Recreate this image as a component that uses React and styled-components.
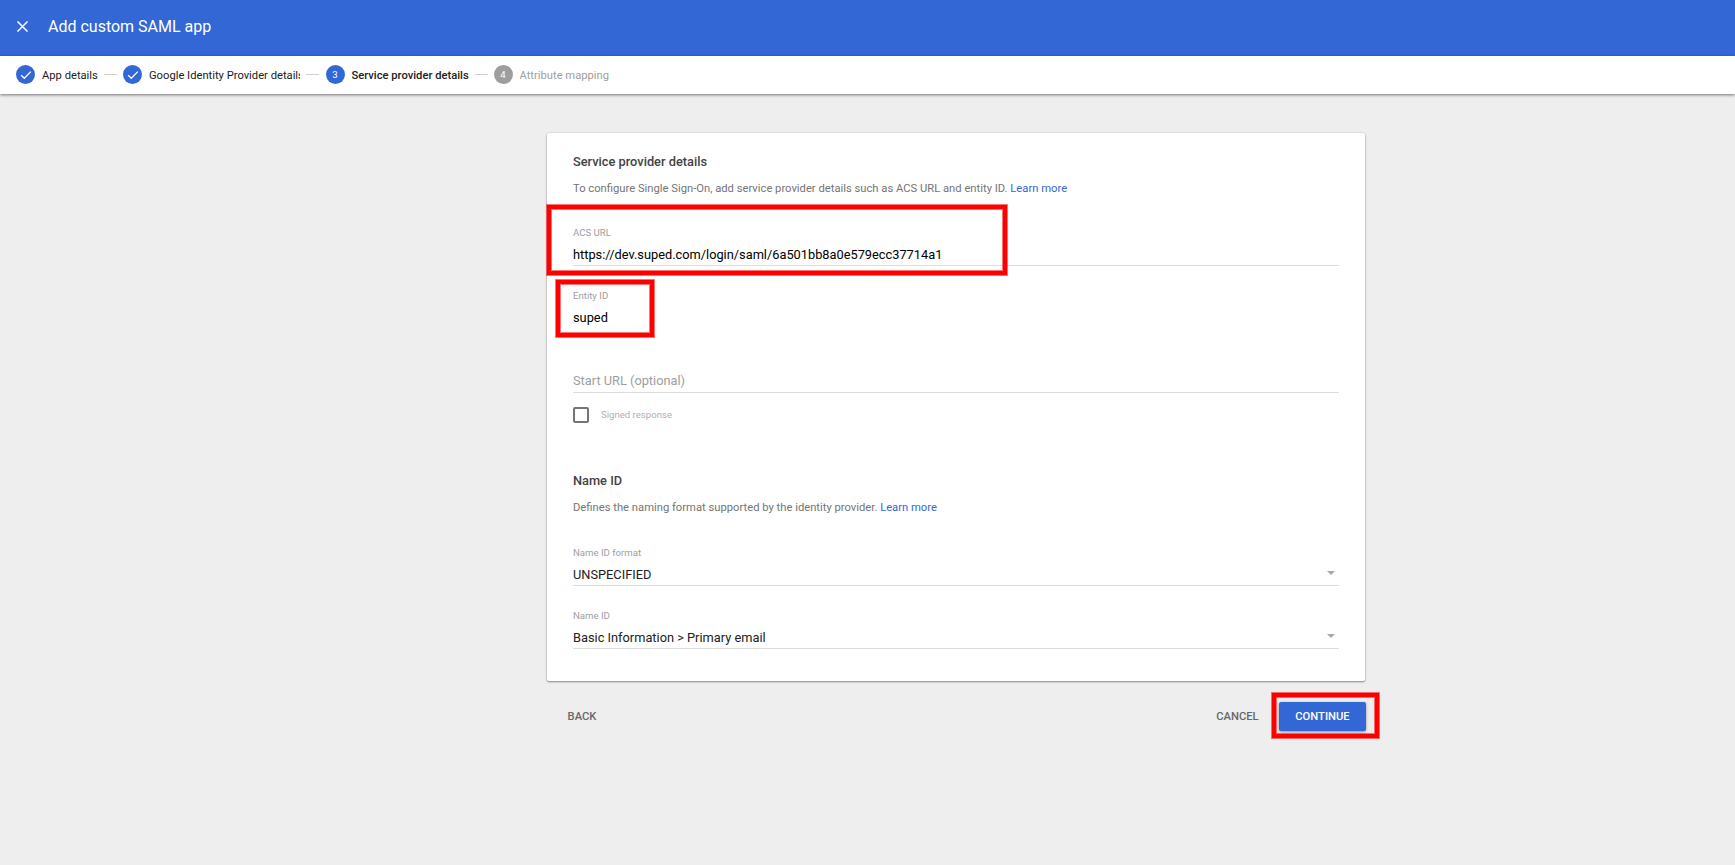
import React from "react";
import styled, { createGlobalStyle } from "styled-components";

const GlobalStyle = createGlobalStyle`
  * { box-sizing: border-box; }
  body { margin: 0; background: #eeeeee; font-family: Roboto, "Liberation Sans", sans-serif; }
`;

const Page = styled.div`
  min-height: 865px;
  display: flex;
  flex-direction: column;
  background: #eeeeee;
  color: #212121;
`;

const TopBar = styled.header`
  height: 56px;
  display: flex;
  align-items: center;
  padding: 0 16px 4px;
  gap: 19px;
  background: #3367d6;
  color: #fff;
`;

const Title = styled.h1`
  margin: 2px 0 0;
  font-size: 16px;
  font-weight: 400;
  line-height: 24px;
`;

const CloseIcon = styled.svg`
  width: 13px;
  height: 13px;
  flex: none;
`;

const Stepper = styled.nav`
  height: 38px;
  display: flex;
  align-items: center;
  padding: 0 16px 1px;
  background: #fff;
  box-shadow: 0 1px 3px rgba(0, 0, 0, 0.5);
`;

const Badge = styled.span`
  width: 19px;
  height: 19px;
  flex: none;
  margin-right: 7px;
  border-radius: 50%;
  display: flex;
  align-items: center;
  justify-content: center;
  background: ${(p) => (p.$muted ? "#9e9e9e" : "#3367d6")};
  color: #fff;
  font-size: 9.6px;
  line-height: 19px;
`;

const StepLabel = styled.span`
  margin-top: 3px;
  font-size: 11.2px;
  line-height: 16px;
  white-space: nowrap;
  overflow: hidden;
  width: ${(p) => p.$width}px;
  font-weight: ${(p) => (p.$active ? 500 : 400)};
  color: ${(p) => (p.$muted ? "#9e9e9e" : "#212121")};
`;

const Connector = styled.span`
  width: 13px;
  height: 1px;
  margin: 0 ${(p) => p.$after || 6}px 0 6px;
  background: #d0d0d0;
`;

const Main = styled.main`
  width: 818.4px;
  margin: 39px 0 0 547px;
`;

const Card = styled.section`
  height: 548px;
  padding: 19px 26px 0;
  background: #fff;
  border-radius: 2px;
  box-shadow: 0 1px 2px rgba(0, 0, 0, 0.4), 0 0 2px rgba(0, 0, 0, 0.15);
`;

const Heading = styled.h2`
  margin: 0 0 9px;
  font-size: 12.8px;
  font-weight: 500;
  line-height: 20px;
  color: #424242;
`;

const Description = styled.p`
  margin: 0 0 ${(p) => p.$gap}px;
  font-size: 11.22px;
  line-height: 16px;
  color: #757575;
`;

const Link = styled.a`
  color: #3367d6;
`;

const Field = styled.div`
  position: relative;
  height: ${(p) => p.$height || 39}px;
  margin-bottom: 24px;
  border-bottom: 1px solid ${(p) => (p.$plain ? "transparent" : "#dcdcdc")};
`;

const FieldLabel = styled.div`
  height: 12px;
  margin-bottom: 7px;
  font-size: 9.6px;
  line-height: 12px;
  color: #9e9e9e;
`;

const FieldValue = styled.div`
  display: flex;
  align-items: center;
  justify-content: space-between;
  font-size: 12.8px;
  line-height: 18px;
  color: ${(p) => p.$color || "#212121"};
`;

const Caret = styled.svg`
  width: 8px;
  height: 4px;
  margin: 0 4px 4px 0;
`;

const CheckRow = styled.label`
  display: flex;
  align-items: center;
  gap: 12px;
  height: 16px;
  margin: -10px 0 48px;
  font-size: 9.6px;
  color: #b0b0b0;
`;

const CheckText = styled.span`
  margin-bottom: 1px;
`;

const Checkbox = styled.span`
  width: 16px;
  height: 16px;
  border: 2px solid #757575;
  border-radius: 2px;
`;

const Actions = styled.div`
  display: flex;
  align-items: center;
  margin: 21px -0.6px 0 0;
`;

const Button = styled.button`
  position: relative;
  height: 29px;
  width: ${(p) => p.$width}px;
  padding: 0 0 1px;
  border: 0;
  border-radius: 2px;
  font-family: inherit;
  font-size: 11.2px;
  font-weight: 500;
  color: ${(p) => (p.$primary ? "#fff" : "#676767")};
  background: ${(p) => (p.$primary ? "#3367d6" : "transparent")};
  box-shadow: ${(p) => (p.$primary ? "0 1px 3px rgba(0,0,0,.4)" : "none")};
`;

const Spacer = styled.span`
  flex: 1;
`;

const Highlight = styled.span`
  position: absolute;
  left: ${(p) => p.$left}px;
  top: ${(p) => p.$top}px;
  width: ${(p) => p.$width}px;
  height: ${(p) => p.$height}px;
  border: 4px solid #ff0000;
  box-shadow: 0 0 0 1px rgba(255, 0, 0, 0.55), inset 0 0 0 1px rgba(255, 0, 0, 0.55);
  pointer-events: none;
  z-index: 1;
`;

const Check = () => (
  <svg width="12" height="10" viewBox="0 0 12 10" fill="none" stroke="#fff" strokeWidth="1.3">
    <path d="M1.2 5.2 4.3 8.3 10.8 1.6" />
  </svg>
);

const DropArrow = () => (
  <Caret viewBox="0 0 8 4">
    <path d="M0 0h8L4 4z" fill="#a8a8a8" />
  </Caret>
);

export default function App() {
  return (
    <Page>
      <GlobalStyle />
      <TopBar>
        <CloseIcon viewBox="0 0 13 13" fill="none" stroke="#fff" strokeWidth="1.5">
          <path d="M1.5 1.5l10 10M11.5 1.5l-10 10" />
        </CloseIcon>
        <Title>Add custom SAML app</Title>
      </TopBar>
      <Stepper>
        <Badge><Check /></Badge>
        <StepLabel $width={56}>App details</StepLabel>
        <Connector />
        <Badge><Check /></Badge>
        <StepLabel $width={151}>Google Identity Provider details</StepLabel>
        <Connector $after={6.5} />
        <Badge>3</Badge>
        <StepLabel $active $width={117}>Service provider details</StepLabel>
        <Connector />
        <Badge $muted>4</Badge>
        <StepLabel $muted $width={100}>Attribute mapping</StepLabel>
      </Stepper>
      <Main>
        <Card>
          <Heading>Service provider details</Heading>
          <Description $gap={30}>
            To configure Single Sign-On, add service provider details such as ACS URL and entity ID. <Link>Learn more</Link>
          </Description>
          <Field>
            <FieldLabel>ACS URL</FieldLabel>
            <FieldValue $color="#000">https://dev.suped.com/login/saml/6a501bb8a0e579ecc37714a1</FieldValue>
            <Highlight $left={-26} $top={-22} $width={459.5} $height={70} />
          </Field>
          <Field $plain>
            <FieldLabel>Entity ID</FieldLabel>
            <FieldValue $color="#000">suped</FieldValue>
            <Highlight $left={-17} $top={-10} $width={98} $height={57} />
          </Field>
          <Field $height={40}>
            <FieldLabel />
            <FieldValue $color="#9e9e9e">Start URL (optional)</FieldValue>
          </Field>
          <CheckRow>
            <Checkbox />
            <CheckText>Signed response</CheckText>
          </CheckRow>
          <Heading>Name ID</Heading>
          <Description $gap={31}>
            Defines the naming format supported by the identity provider. <Link>Learn more</Link>
          </Description>
          <Field>
            <FieldLabel>Name ID format</FieldLabel>
            <FieldValue>UNSPECIFIED<DropArrow /></FieldValue>
          </Field>
          <Field>
            <FieldLabel>Name ID</FieldLabel>
            <FieldValue>Basic Information &gt; Primary email<DropArrow /></FieldValue>
          </Field>
        </Card>
        <Actions>
          <Button $width={70}>BACK</Button>
          <Spacer />
          <Button $width={83}>CANCEL</Button>
          <Button $primary $width={87}>
            CONTINUE
            <Highlight $left={-7} $top={-9} $width={107} $height={45} />
          </Button>
        </Actions>
      </Main>
    </Page>
  );
}
